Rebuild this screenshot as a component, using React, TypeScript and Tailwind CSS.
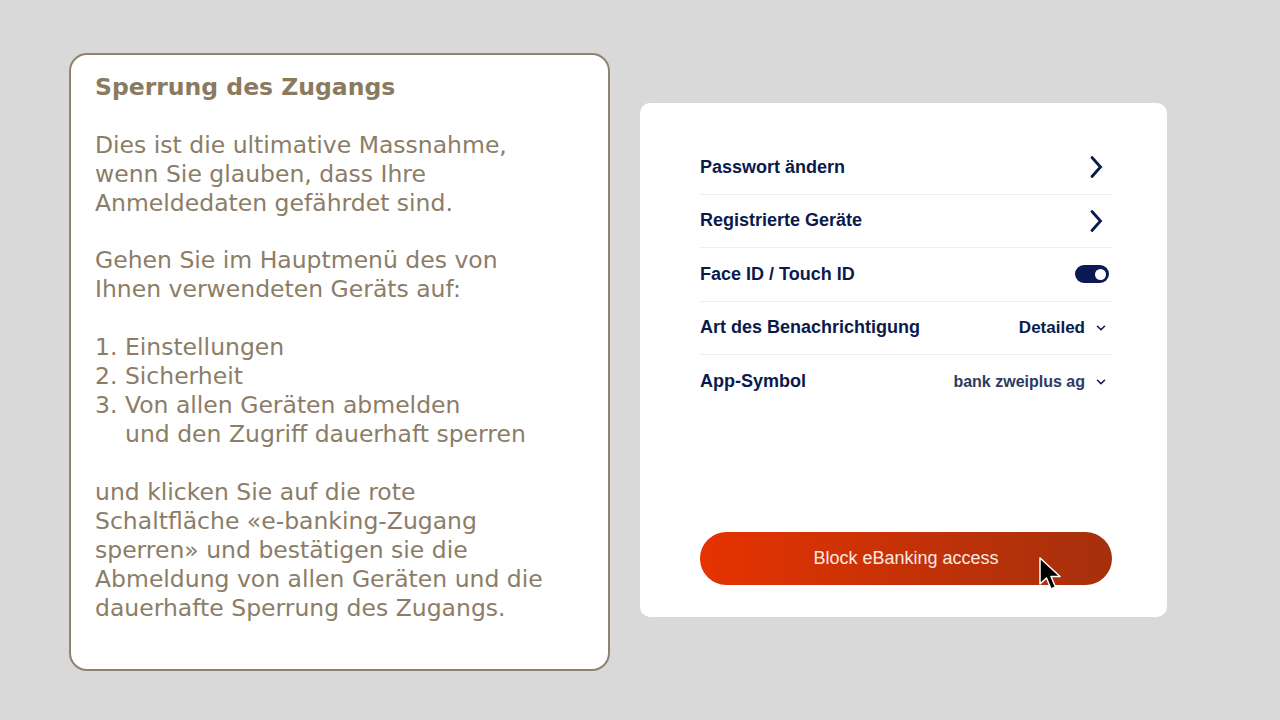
import { ChevronDown } from "lucide-react";

const rows = [
  { label: "Passwort ändern", kind: "link" },
  { label: "Registrierte Geräte", kind: "link" },
  { label: "Face ID / Touch ID", kind: "toggle" },
  { label: "Art des Benachrichtigung", kind: "select", value: "Detailed" },
  { label: "App-Symbol", kind: "select", value: "bank zweiplus ag" },
];

function Chevron() {
  return (
    <svg width="14" height="24" viewBox="0 0 14 24" fill="none">
      <path d="M3 2.5 L11.5 12 L3 21.5" stroke="#0b1a4d" strokeWidth="2.8" strokeLinecap="round" strokeLinejoin="miter" />
    </svg>
  );
}

function Cursor() {
  return (
    <svg className="absolute left-[338px] top-[24px]" width="26" height="38" viewBox="0 0 26 38">
      <path
        d="M2 2 L2 28 L8.5 22 L13 33 L17.5 31 L13 20.5 L22 20.5 Z"
        fill="#000"
        stroke="#fff"
        strokeWidth="1.5"
        strokeLinejoin="round"
      />
    </svg>
  );
}

export default function App() {
  return (
    <div className="flex h-[720px] w-[1280px] items-start bg-[#d9d9d9]">
      <div className="ml-[69px] mt-[53px] h-[618px] w-[541px] rounded-[18px] border-2 border-[#8e8370] bg-white px-[24px] pt-[18px] font-['DejaVu_Sans',sans-serif] text-[23.5px] leading-[29px] text-[#8b7d67]">
        <p className="font-bold text-[#8a7a60]">Sperrung des Zugangs</p>
        <p className="mt-[29px]">
          Dies ist die ultimative Massnahme,
          <br />
          wenn Sie glauben, dass Ihre
          <br />
          Anmeldedaten gefährdet sind.
        </p>
        <p className="mt-[28px]">
          Gehen Sie im Hauptmenü des von
          <br />
          Ihnen verwendeten Geräts auf:
        </p>
        <div className="mt-[29px]">
          <p>1. Einstellungen</p>
          <p>2. Sicherheit</p>
          <p>3. Von allen Geräten abmelden</p>
          <p className="pl-[30px]">und den Zugriff dauerhaft sperren</p>
        </div>
        <p className="mt-[29px]">
          und klicken Sie auf die rote
          <br />
          Schaltfläche «e-banking-Zugang
          <br />
          sperren» und bestätigen sie die
          <br />
          Abmeldung von allen Geräten und die
          <br />
          dauerhafte Sperrung des Zugangs.
        </p>
      </div>

      <div className="ml-[30px] mt-[103px] flex h-[514px] w-[527px] flex-col rounded-[10px] bg-white pl-[60px] pr-[55px] font-['Liberation_Sans',Arial,sans-serif]">
        <div className="mt-[38px] flex flex-col">
          {rows.map((r, i) => (
            <div
              key={r.label}
              className={`flex h-[53.5px] items-center justify-between ${i < rows.length - 1 ? "border-b border-[#eceef2]" : ""}`}
            >
              <span className="text-[18px] font-bold text-[#0b1a4d]">{r.label}</span>
              {r.kind === "link" && (
                <span className="mr-[9px] flex">
                  <Chevron />
                </span>
              )}
              {r.kind === "toggle" && (
                <span className="mr-[3px] flex h-[18px] w-[34px] items-center justify-end rounded-full bg-[#0b1a52] pr-[3px]">
                  <span className="h-[11px] w-[11px] rounded-full bg-white" />
                </span>
              )}
              {r.kind === "select" && (
                <span
                  className={`flex items-center gap-[9px] font-bold ${i === 3 ? "text-[17px] text-[#0b1a4d]" : "text-[16px] text-[#2e3b5e]"}`}
                >
                  {r.value}
                  <ChevronDown className="mr-[4px] h-[14px] w-[14px] text-[#0b1a4d]" strokeWidth={2.6} />
                </span>
              )}
            </div>
          ))}
        </div>
        <div className="relative mb-[32px] mt-auto">
          <button className="flex h-[53px] w-full items-center justify-center rounded-full bg-gradient-to-r from-[#e63200] to-[#a5300c] text-[18px] text-[#fbe9e2]">
            Block eBanking access
          </button>
          <Cursor />
        </div>
      </div>
    </div>
  );
}
